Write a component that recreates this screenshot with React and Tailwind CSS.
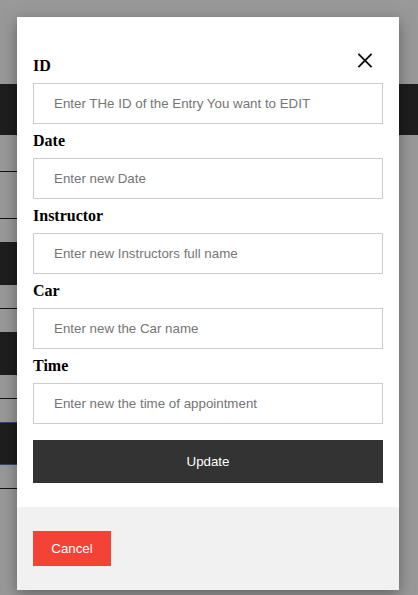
import React from "react";

const fields = [
  { label: "ID", placeholder: "Enter THe ID of the Entry You want to EDIT" },
  { label: "Date", placeholder: "Enter new Date" },
  { label: "Instructor", placeholder: "Enter new Instructors full name" },
  { label: "Car", placeholder: "Enter new the Car name" },
  { label: "Time", placeholder: "Enter new the time of appointment" },
];

export default function App() {
  return (
    <div className="relative h-[595px] w-full overflow-hidden bg-[#999999] font-['Liberation_Sans',Arial,sans-serif]">
      {/* page behind the modal overlay */}
      <div className="h-[84px]" />
      <div className="h-[51px] bg-[#1e1e1e]" />
      <div className="w-[17px]">
        <div className="h-[36px]" />
        <div className="h-px bg-[#111]" />
        <div className="h-[46px]" />
        <div className="h-px bg-[#111]" />
        <div className="h-[23px]" />
        <div className="h-[43px] bg-[#1e1e1e]" />
        <div className="h-[23px]" />
        <div className="h-px bg-[#111]" />
        <div className="h-[23px]" />
        <div className="h-[43px] bg-[#1e1e1e]" />
        <div className="h-[23px]" />
        <div className="h-px bg-[#111]" />
        <div className="h-[23px]" />
        <div className="h-[43px] border-y border-[#30466b] bg-[#1e1e1e]" />
        <div className="h-[23px]" />
        <div className="h-px bg-[#111]" />
      </div>

      {/* modal */}
      <div className="absolute left-[17px] top-[17px] w-[382px] bg-white shadow-[0_4px_10px_0_rgba(0,0,0,0.2),0_4px_20px_0_rgba(0,0,0,0.19)]">
        <button className="absolute right-[26px] top-[35px] flex h-[16px] w-[16px] items-center justify-center">
          <svg width="17" height="17" viewBox="0 0 17 17">
            <path d="M1.5 1.5 L15.5 15.5 M15.5 1.5 L1.5 15.5" stroke="#111" strokeWidth="2" fill="none" />
          </svg>
        </button>
        <div className="px-4 pt-[40px]">
          {fields.map((f, i) => (
            <div key={f.label} className={i === 0 ? "" : "mt-[8px]"}>
              <label className="block h-[18px] text-[16px] font-bold leading-[18px] text-black font-['Liberation_Serif','Times_New_Roman',serif]">
                {f.label}
              </label>
              <input
                placeholder={f.placeholder}
                className="mt-[8px] block h-[41px] w-full border border-[#cccccc] pl-[20px] text-[13.33px] text-black outline-none placeholder:text-[#757575]"
              />
            </div>
          ))}
          <button className="mt-[16px] h-[43px] w-full bg-[#333333] text-[13.33px] text-white">
            Update
          </button>
        </div>
        <div className="mt-[24px] bg-[#f1f1f1] px-4 py-[24px]">
          <button className="h-[35px] w-[78px] bg-[#f44336] text-[13.33px] text-white">
            Cancel
          </button>
        </div>
      </div>
    </div>
  );
}
